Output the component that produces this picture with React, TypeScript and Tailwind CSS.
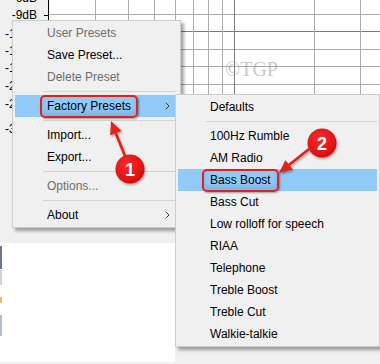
import React from "react";

const hLines = [14.5, 31.5, 49.5, 66.5, 84.5, 101.5, 119.5, 136.5, 154.5, 171.5, 189.5, 206.5, 224.5];
const vLines = [95.5, 128.5, 154.5, 175.5, 193.5, 208.5, 222.5, 234.5, 314.5, 360.5];
const darkH = 31.5;
const darkV = 234.5;

const axisLabels: [string, number][] = [
  ["-6dB", -3],
  ["-9dB", 14],
  ["-12dB", 33],
  ["-15dB", 50],
  ["-18dB", 67],
  ["-21dB", 85],
  ["-24dB", 103],
  ["-30dB", 128],
];

function Chevron() {
  return (
    <svg width="5" height="8" viewBox="0 0 5 8" className="block">
      <path d="M0.8 0.8 L4 4 L0.8 7.2" stroke="#3a3a3a" strokeWidth="1" fill="none" />
    </svg>
  );
}

type ItemProps = { label: string; disabled?: boolean; active?: boolean; sub?: boolean; main?: boolean };

function Item({ label, disabled, active, sub, main }: ItemProps) {
  const margin = main ? "ml-[2px] mr-[4px]" : "ml-[2px] mr-[2px]";
  const bg = active ? "bg-[#91c9f7]" : "";
  const color = disabled ? "text-[#6d6d6d]" : "text-black";
  return (
    <div className={`${margin} ${bg} ${color} h-[22px] flex items-center pl-[32px] pr-[6px]`}>
      <span className="flex-1 whitespace-nowrap leading-none">{label}</span>
      {sub ? <Chevron /> : null}
    </div>
  );
}

function Sep({ main }: { main?: boolean }) {
  const margin = main ? "ml-[30px] mr-[4px]" : "ml-[30px] mr-[2px]";
  return (
    <div className={`h-[7px] flex items-center ${margin}`}>
      <div className="h-px w-full bg-[#d4d4d4]" />
    </div>
  );
}

export default function App() {
  return (
    <div className="relative w-[380px] h-[364px] overflow-hidden bg-[#f0f0f0] font-['Liberation_Sans',Arial,sans-serif] text-[12px]">
      {/* background: chart + lower panel */}
      <div className="flex flex-col">
        <svg width="380" height="228" className="block">
          <rect x="48.5" y="0" width="332" height="228" fill="#ffffff" />
          {hLines.map((y) => (
            <line key={"h" + y} x1="49" x2="380" y1={y} y2={y} stroke={y === darkH ? "#7c7c7c" : "#ababab"} strokeWidth="1" />
          ))}
          {vLines.map((x) => (
            <line key={"v" + x} x1={x} x2={x} y1="0" y2="228" stroke={x === darkV ? "#7c7c7c" : "#ababab"} strokeWidth="1" />
          ))}
          <line x1="48.5" x2="48.5" y1="0" y2="228" stroke="#000" strokeWidth="1" />
          <line x1="44" x2="49" y1="15.5" y2="15.5" stroke="#000" strokeWidth="1" />
          {axisLabels.map(([t, y]) => (
            <text key={t} x="37" y={y + 4.5} textAnchor="end" fontSize="12" fill="#000" fontFamily="Liberation Sans, Arial, sans-serif">
              {t}
            </text>
          ))}
          <text x="225" y="76" fontSize="20" fill="rgba(150,150,150,0.55)" fontFamily="Liberation Serif, Times New Roman, serif">
            ©TGP
          </text>
        </svg>
        <div className="mt-[15px] w-[175px] h-[119px] bg-white flex flex-col">
          <div className="mt-[3px] w-[2px] h-[23px] bg-[#6b7592]" />
          <div className="mt-[1px] w-[2px] h-[15px] bg-[#d2d2d2]" />
          <div className="mt-[12px] w-[2px] h-[6px] bg-[#dcc069]" />
          <div className="mt-[12px] w-[2px] h-[21px] bg-[#b4bccb]" />
        </div>
      </div>

      {/* main context menu */}
      <div className="absolute left-[12px] top-[20px] w-[169px] border border-[#cccccc] bg-[#f0f0f0] py-px shadow-[3px_3px_3px_rgba(0,0,0,0.35)]">
        <Item main label="User Presets" disabled />
        <Item main label="Save Preset..." />
        <Item main label="Delete Preset" disabled />
        <Sep main />
        <Item main label="Factory Presets" active sub />
        <Sep main />
        <Item main label="Import..." />
        <Item main label="Export..." />
        <Sep main />
        <Item main label="Options..." disabled />
        <Sep main />
        <Item main label="About" sub />
      </div>

      {/* red highlight 1 */}
      <div className="absolute left-[40px] top-[95px] w-[98px] h-[23px] rounded-[5px] border-2 border-[#e0211c] shadow-[1px_1px_2px_rgba(0,0,0,0.35),inset_0_-4px_5px_rgba(40,80,130,0.18)]" />

      {/* submenu */}
      <div className="absolute left-[175px] top-[94px] w-[205px] border border-[#cccccc] bg-[#f0f0f0] py-px shadow-[3px_3px_3px_rgba(0,0,0,0.35)]">
        <Item label="Defaults" />
        <Sep />
        <Item label="100Hz Rumble" />
        <Item label="AM Radio" />
        <Item label="Bass Boost" active />
        <Item label="Bass Cut" />
        <Item label="Low rolloff for speech" />
        <Item label="RIAA" />
        <Item label="Telephone" />
        <Item label="Treble Boost" />
        <Item label="Treble Cut" />
        <Item label="Walkie-talkie" />
      </div>

      {/* red highlight 2 */}
      <div className="absolute left-[202px] top-[169px] w-[77px] h-[23px] rounded-[5px] border-2 border-[#e0211c] shadow-[1px_1px_2px_rgba(0,0,0,0.35),inset_0_-4px_5px_rgba(40,80,130,0.18)]" />

      {/* annotations */}
      <svg width="380" height="364" className="absolute left-0 top-0 pointer-events-none">
        <defs>
          <radialGradient id="rg" cx="0.4" cy="0.35" r="0.7">
            <stop offset="0" stopColor="#ff2a2a" />
            <stop offset="1" stopColor="#d10b0b" />
          </radialGradient>
          <filter id="sh" x="-30%" y="-30%" width="160%" height="160%">
            <feDropShadow dx="1" dy="1.5" stdDeviation="1.2" floodColor="#000" floodOpacity="0.35" />
          </filter>
        </defs>
        <g filter="url(#sh)">
          <line x1="125" y1="156" x2="114.5" y2="130" stroke="#e0211c" strokeWidth="2.6" />
          <polygon points="111,121 121.6,130.9 110.2,135.3" fill="#e0211c" />
          <circle cx="130" cy="169" r="14.5" fill="url(#rg)" />
          <line x1="309" y1="149" x2="287" y2="166.5" stroke="#e0211c" strokeWidth="2.6" />
          <polygon points="279,173 285.4,160.2 293,169.6" fill="#e0211c" />
          <circle cx="322" cy="143" r="14.5" fill="url(#rg)" />
        </g>
        <text x="130" y="175.5" textAnchor="middle" fontSize="18" fontWeight="bold" fill="#fff" fontFamily="Liberation Sans, Arial, sans-serif">
          1
        </text>
        <text x="322" y="149.5" textAnchor="middle" fontSize="18" fontWeight="bold" fill="#fff" fontFamily="Liberation Sans, Arial, sans-serif">
          2
        </text>
      </svg>
    </div>
  );
}
